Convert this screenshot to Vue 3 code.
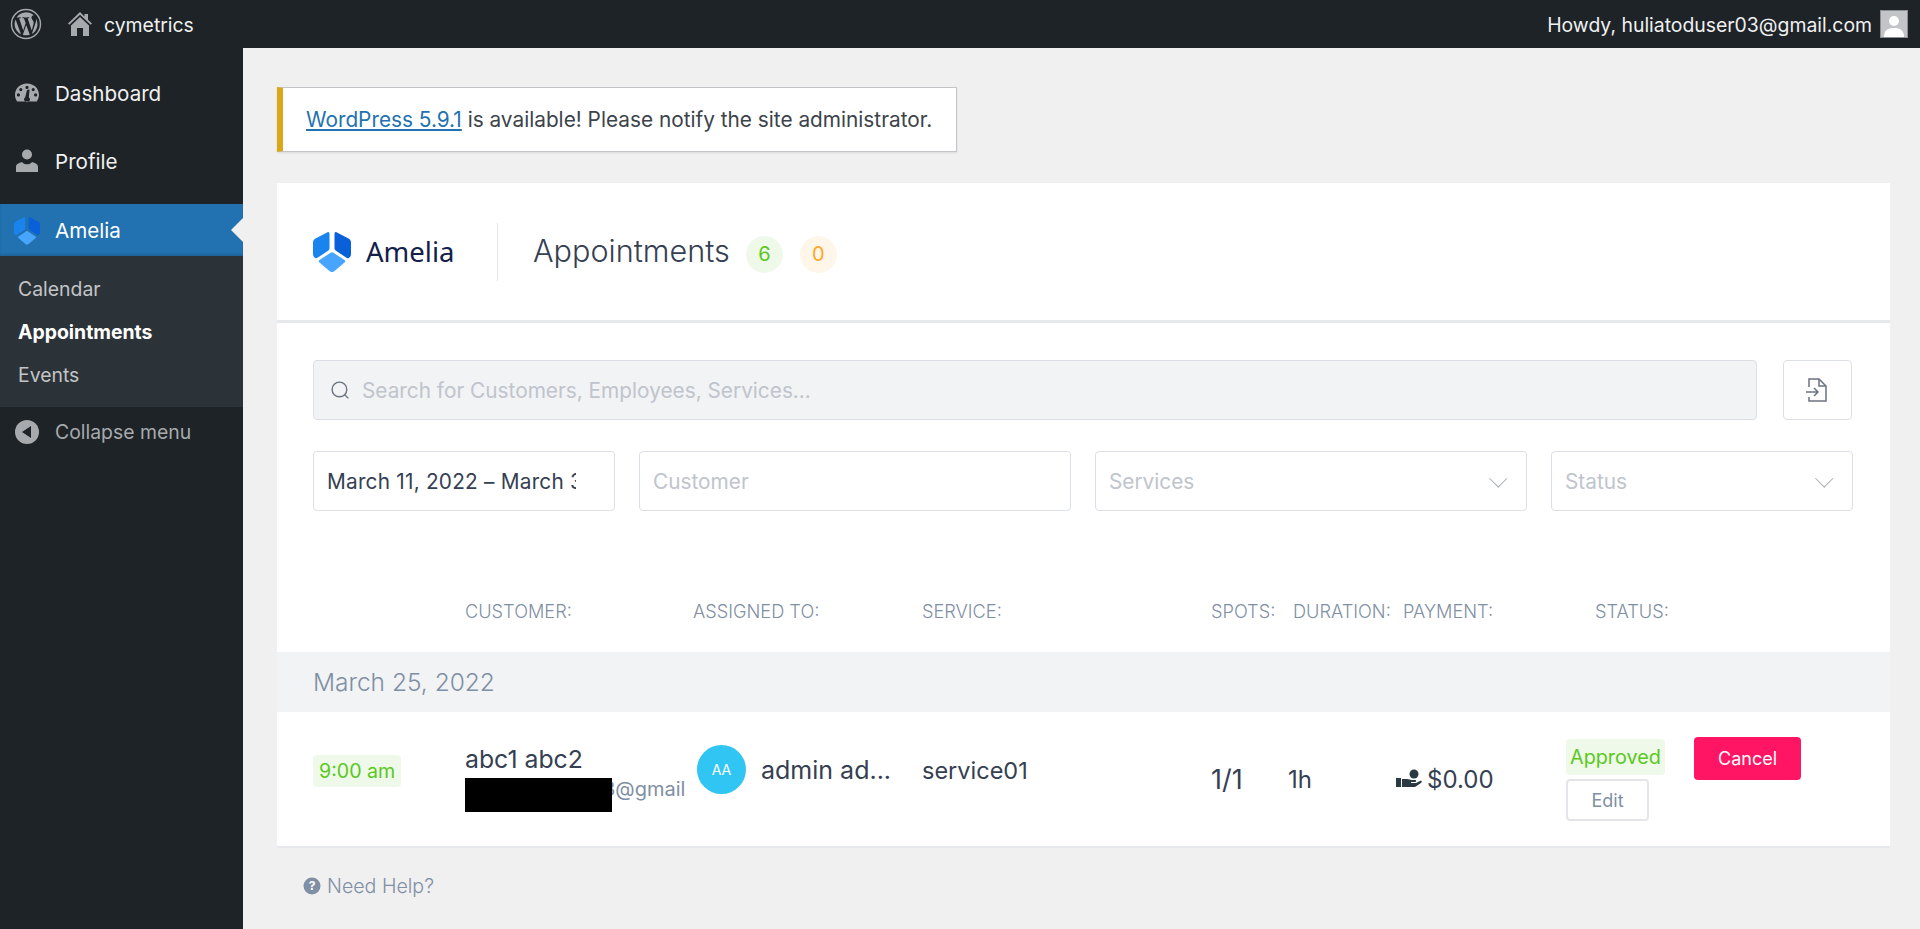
<script setup>
const menu = ['Calendar', 'Appointments', 'Events']
const headers = [
  { label: '', w: 152 },
  { label: 'CUSTOMER:', w: 228 },
  { label: 'ASSIGNED TO:', w: 229 },
  { label: 'SERVICE:', w: 289 },
  { label: 'SPOTS:', w: 82 },
  { label: 'DURATION:', w: 110 },
  { label: 'PAYMENT:', w: 192 },
  { label: 'STATUS:', w: 100 }
]
</script>

<template>
  <div class="page">
    <header class="topbar">
      <div class="top-left">
        <svg class="wp" viewBox="0 0 32 32" width="32" height="32">
          <circle cx="16" cy="16" r="14.5" fill="none" stroke="#a7aaad" stroke-width="1.4" />
          <path fill="#a7aaad" d="M4.6 16c0 4.5 2.6 8.4 6.4 10.2L5.6 11.4A11.4 11.4 0 0 0 4.6 16Zm19.1-.6c0-1.4-.5-2.4-1-3.1-.6-1-1.200-1.900-1.200-2.900 0-1.100.9-2.200 2.100-2.200h.2A11.4 11.4 0 0 0 6.600 9.500h.7c1.200 0 3-.2 3-.2.6 0 .7.9.1.9 0 0-.6.1-1.300.1l4.100 12.300 2.500-7.500-1.800-4.800c-.6 0-1.200-.1-1.200-.1-.6 0-.5-1 .1-.9 0 0 1.900.2 3 .2 1.200 0 3-.2 3-.2.6 0 .7.9.1.9 0 0-.6.1-1.300.1l4.100 12.200 1.100-3.800c.5-1.500.8-2.600.8-3.600Zm-7.500 1.600-3.400 9.900a11.400 11.400 0 0 0 7-.2l-.1-.1-3.500-9.600Zm9.800-6.400.1 1.200c0 1.200-.2 2.500-.9 4.200l-3.400 10a11.400 11.400 0 0 0 4.200-15.400Z" />
        </svg>
        <svg class="home" viewBox="0 0 24 26" width="24" height="26">
          <path fill="#a7aaad" d="M12 1 0 12.500l1.300 1.300L12 3.700l10.700 10.100 1.300-1.300-4-3.800V3h-3.500v2.400L12 1Z" />
          <path fill="#a7aaad" fill-rule="evenodd" d="M12 6 3 14.500V25h18V14.500L12 6Zm-3 11h6v8H9Z" />
        </svg>
        <span class="site">cymetrics</span>
      </div>
      <div class="top-right">
        <span class="howdy">Howdy, huliatoduser03@gmail.com</span>
        <span class="avatar">
          <svg viewBox="0 0 26 26" width="26" height="26">
            <rect width="26" height="26" fill="#c3c4c7" />
            <circle cx="13" cy="10" r="5" fill="#fff" />
            <path fill="#fff" d="M3 26c0-7 4-9 10-9s10 2 10 9Z" />
          </svg>
        </span>
      </div>
    </header>

    <div class="body">
      <aside class="sidebar">
        <a class="item">
          <svg class="mi" viewBox="0 0 26 24" width="26" height="24">
            <path fill="#a7aaad" fill-rule="evenodd" d="M13 2.500C6 2.500 1 7.500 1 14c0 2.500.8 4.800 2.200 6.500h19.600A11 11 0 0 0 25 14c0-6.500-5-11.500-12-11.500Zm0 2.300a1.600 1.600 0 1 1 0 3.200 1.600 1.600 0 0 1 0-3.200ZM6.800 7a1.600 1.600 0 1 1 0 3.200 1.600 1.600 0 0 1 0-3.200Zm12.400 0a1.600 1.600 0 1 1 0 3.200 1.600 1.600 0 0 1 0-3.200ZM4.400 12.300a1.600 1.600 0 1 1 0 3.200 1.600 1.600 0 0 1 0-3.200Zm17.200 0a1.600 1.600 0 1 1 0 3.200 1.600 1.600 0 0 1 0-3.200ZM15.600 8.500l-.8 7.700a2.800 2.800 0 1 1-3.600 0L13 9Z" />
          </svg>
          <span>Dashboard</span>
        </a>
        <a class="item">
          <svg class="mi" viewBox="0 0 26 26" width="26" height="26">
            <circle cx="13" cy="6.500" r="5" fill="#a7aaad" />
            <path fill="#a7aaad" d="M2 24v-5c0-3 3-4 6-5 1 1.500 3 2.300 5 2.300s4-.8 5-2.300c3 1 6 2 6 5v5Z" />
          </svg>
          <span>Profile</span>
        </a>
        <a class="item active">
          <svg class="mi" viewBox="0 0 38 41" width="27" height="29">
            <path fill="#1a84ee" d="M14.500 1.300 2.500 7.600C.8 8.500 0 9.800 0 11.500V23c0 2 .8 3.200 2.200 3.900.8.400 1.600.300 2.300-.1l10.500-7c1-.7 1.500-1.500 1.500-2.800V3c0-1.700-1-2.500-2-1.700Z" />
            <path fill="#0a60d8" d="M23.500 1.300l12 6.300c1.700.9 2.500 2.200 2.500 3.900V23c0 2-.8 3.200-2.200 3.900-.8.400-1.600.300-2.300-.1l-10.500-7c-1-.7-1.500-1.500-1.500-2.800V3c0-1.700 1-2.500 2-1.700Z" />
            <path fill="#47a5ff" d="M17.500 21.800c1-.7 2-.7 3 0l11 7.300c1 .7 1 1.700 0 2.400l-10.500 9c-1.200.7-2.800.7-4 0l-10.500-9c-1-.7-1-1.700 0-2.400Z" />
          </svg>
          <span>Amelia</span>
          <i class="notch"></i>
        </a>
        <nav class="submenu">
          <a v-for="m in menu" :key="m" class="sub" :class="{ current: m === 'Appointments' }">{{ m }}</a>
        </nav>
        <a class="collapse">
          <svg class="mi" viewBox="0 0 26 26" width="26" height="26">
            <circle cx="13" cy="13" r="12" fill="#a7aaad" />
            <path fill="#1d2327" d="M17 7v12L8 13Z" />
          </svg>
          <span>Collapse menu</span>
        </a>
      </aside>

      <main class="main">
        <div class="notice">
          <a class="link">WordPress 5.9.1</a> is available! Please notify the site administrator.
        </div>

        <section class="card">
          <div class="head">
            <div class="brand">
              <svg viewBox="0 0 38 41" width="38" height="41">
                <path fill="#1a84ee" d="M14.500 1.300 2.500 7.600C.8 8.500 0 9.800 0 11.500V23c0 2 .8 3.200 2.200 3.900.8.400 1.600.300 2.300-.1l10.500-7c1-.7 1.500-1.500 1.500-2.800V3c0-1.700-1-2.500-2-1.700Z" />
                <path fill="#0a60d8" d="M23.500 1.300l12 6.300c1.700.9 2.500 2.200 2.500 3.900V23c0 2-.8 3.200-2.200 3.900-.8.400-1.600.300-2.300-.1l-10.500-7c-1-.7-1.500-1.500-1.500-2.800V3c0-1.700 1-2.500 2-1.700Z" />
                <path fill="#47a5ff" d="M17.500 21.800c1-.7 2-.7 3 0l11 7.300c1 .7 1 1.700 0 2.400l-10.500 9c-1.200.7-2.800.7-4 0l-10.500-9c-1-.7-1-1.700 0-2.400Z" />
              </svg>
              <span class="brand-name">Amelia</span>
            </div>
            <div class="title-wrap">
              <h1>Appointments</h1>
              <span class="count green">6</span>
              <span class="count orange">0</span>
            </div>
          </div>

          <div class="filters">
            <div class="search-row">
              <div class="search">
                <svg viewBox="0 0 20 20" width="21" height="21">
                  <circle cx="9" cy="9" r="7" fill="none" stroke="#6b7280" stroke-width="1.300" />
                  <path d="m14 14 3.500 3.500" stroke="#6b7280" stroke-width="1.300" />
                </svg>
                <span>Search for Customers, Employees, Services...</span>
              </div>
              <button class="export">
                <svg viewBox="0 0 26 26" width="26" height="26" fill="none" stroke="#6b7280" stroke-width="1.500">
                  <path d="M4 10V2h10l7 7v15H4v-4" />
                  <path d="M14 2v7h7M1 15h12M9 11l4 4-4 4" />
                </svg>
              </button>
            </div>
            <div class="filter-row">
              <div class="field date"><span class="clip">March 11, 2022 – March 31, 2022</span></div>
              <div class="field wide"><span class="ph">Customer</span></div>
              <div class="field wide"><span class="ph">Services</span><i class="chev"></i></div>
              <div class="field status"><span class="ph">Status</span><i class="chev"></i></div>
            </div>
          </div>

          <div class="thead">
            <span v-for="h in headers" :key="h.label" class="th" :style="{ width: h.w + 'px' }">{{ h.label }}</span>
          </div>

          <div class="date-row">March 25, 2022</div>

          <div class="row">
            <div class="col c-time"><span class="time">9:00 am</span></div>
            <div class="col c-cust">
              <div class="name">abc1 abc2</div>
              <div class="mail"><span class="redact"></span><span class="mail-text">3@gmail.com</span></div>
            </div>
            <div class="col c-emp">
              <span class="ava">AA</span>
              <span class="text emp-name">admin ad...</span>
            </div>
            <div class="col c-serv"><span class="text serv-name">service01</span></div>
            <div class="col c-spots"><span class="text spots">1/1</span></div>
            <div class="col c-dur"><span class="text">1h</span></div>
            <div class="col c-pay">
              <svg viewBox="0 0 26 20" width="26" height="20">
                <circle cx="18" cy="5" r="4.500" fill="#2b3a42" />
                <rect x="0" y="9" width="5" height="9" fill="#2b3a42" />
                <path fill="#2b3a42" d="M6 10h5c2 0 3 1 5 1h3c1.500 0 1.500 2 0 2h-4v1h5l4-2c1.500-.6 2.500 1 1 2l-6 4H6Z" />
              </svg>
              <span class="text">$0.00</span>
            </div>
            <div class="col c-status">
              <span class="approved">Approved</span>
              <button class="edit">Edit</button>
            </div>
            <button class="cancel">Cancel</button>
          </div>
        </section>

        <div class="help">
          <svg viewBox="0 0 18 18" width="18" height="18">
            <circle cx="9" cy="9" r="8.500" fill="#7f8fa4" />
            <text x="9" y="13" text-anchor="middle" font-size="12" font-weight="700" fill="#fff" font-family="Inter, sans-serif">?</text>
          </svg>
          <span>Need Help?</span>
        </div>
      </main>
    </div>
  </div>
</template>

<style>
html, body { margin: 0; padding: 0; background: #f0f0f1; }
</style>

<style scoped>
.page { width: 1920px; height: 929px; overflow: hidden; font-family: Inter, "Liberation Sans", sans-serif; background: #f0f0f1; display: flex; flex-direction: column; }
.topbar { height: 48px; flex: none; background: #1d2327; display: flex; justify-content: space-between; align-items: center; padding: 0 12px 0 10px; box-sizing: border-box; color: #f0f0f1; font-size: 19.4px; }
.top-left, .top-right { display: flex; align-items: center; }
.wp { margin-right: 26px; }
.home { margin-right: 12px; }
.site { margin-top: 1px; }
.howdy { margin: 1px 8px 0 0; }
.avatar { width: 28px; height: 28px; border: 1px solid #8c8f94; box-sizing: border-box; display: flex; overflow: hidden; }

.body { flex: 1; display: flex; min-height: 0; }
.sidebar { width: 243px; flex: none; background: #1d2327; padding-top: 11px; box-sizing: border-box; }
.item { height: 68px; display: flex; align-items: center; color: #f0f0f1; font-size: 20.6px; padding-left: 14px; box-sizing: border-box; }
.item .mi { margin-right: 15px; width: 26px; flex: none; }
.item.active { height: 52px; margin-top: 9px; background: #2271b1; color: #fff; position: relative; box-shadow: inset 0 -2px 2px rgba(0,0,0,.12); }
.notch { position: absolute; right: 0; top: 14px; border: 12px solid transparent; border-right-color: #f0f0f1; border-left-width: 0; }
.submenu { background: #2c3338; height: 151px; padding: 12px 0 11px; box-sizing: border-box; display: flex; flex-direction: column; }
.sub { color: #c3c4c7; font-size: 19.4px; padding: 0 18px; line-height: 43px; }
.sub.current { color: #fff; font-weight: 700; }
.collapse { height: 50px; display: flex; align-items: center; padding-left: 14px; color: #a7aaad; font-size: 19.4px; }
.collapse .mi { margin-right: 15px; }

.main { flex: 1; min-width: 0; padding: 39px 30px 0 34px; box-sizing: border-box; }
.notice { width: 680px; height: 65px; box-sizing: border-box; background: #fff; border: 1px solid #c3c4c7; border-left: 6px solid #dba617; display: flex; align-items: center; white-space: pre; padding-left: 23px; font-size: 20.8px; color: #3c434a; box-shadow: 0 1px 2px rgba(0,0,0,.1); }
.link { color: #2271b1; text-decoration: underline; }

.card { margin-top: 31px; background: #fff; width: 1613px; height: 665px; border-bottom: 2px solid #e6e8ec; box-sizing: border-box; }
.head { height: 137px; border-bottom: 3px solid #e6e8ec; display: flex; align-items: center; padding-left: 36px; box-sizing: content-box; }
.brand { width: 184px; height: 58px; border-right: 1px solid #e2e5e9; display: flex; align-items: center; box-sizing: content-box; }
.brand-name { font-family: "Noto Sans", sans-serif; font-size: 27.5px; font-weight: 400; color: #12204a; margin-left: 15px; margin-top: -1px; }
.title-wrap { display: flex; align-items: center; margin-left: 35px; }
h1 { margin: -2px 16px 0 0; font-size: 30.6px; font-weight: 300; color: #354052; }
.count { width: 37px; height: 37px; border-radius: 50%; display: flex; align-items: center; justify-content: center; font-size: 20px; margin-right: 17px; margin-top: 5px; }
.green { background: #eff9e9; color: #5ac81e; }
.orange { background: #fff6ea; color: #ffa726; }

.filters { padding: 37px 38px 0 36px; }
.search-row { display: flex; justify-content: space-between; }
.search { width: 1444px; height: 60px; box-sizing: border-box; background: #f1f3f5; border: 1px solid #dcdfe6; border-radius: 4px; display: flex; align-items: center; padding-left: 16px; gap: 11px; color: #c0c4cc; font-size: 20.8px; }
.export { width: 69px; height: 60px; background: #fff; border: 1px solid #dcdfe6; border-radius: 4px; display: flex; align-items: center; justify-content: center; padding: 0; }
.filter-row { display: flex; gap: 24px; margin-top: 31px; width: 1540px; }
.field { height: 60px; box-sizing: border-box; border: 1px solid #dcdfe6; border-radius: 4px; display: flex; align-items: center; justify-content: space-between; padding: 0 22px 0 13px; font-size: 20.8px; position: relative; flex: none; }
.date { width: 302px; color: #354052; padding-right: 38px; letter-spacing: .22px; }
.clip { overflow: hidden; white-space: nowrap; }
.wide { width: 432px; }
.status { width: 302px; }
.ph { color: #c0c4cc; }
.chev { width: 11.5px; height: 11.5px; border-right: 1px solid #a9adb5; border-bottom: 1px solid #a9adb5; transform: rotate(45deg); margin-top: -6px; }

.thead { display: flex; margin-top: 90px; padding-left: 36px; height: 21px; }
.th { flex: none; font-size: 18.2px; font-weight: 300; color: #7f8fa4; line-height: 21px; white-space: nowrap; }
.date-row { margin-top: 30px; height: 60px; background: #f1f3f5; display: flex; align-items: center; padding-left: 36px; font-size: 24.5px; font-weight: 300; color: #7f8fa4; }

.row { height: 134px; display: flex; padding-left: 36px; position: relative; }
.col { flex: none; box-sizing: border-box; }
.text { font-size: 24px; color: #354052; white-space: nowrap; }
.emp-name { font-size: 25px; }
.serv-name { font-size: 23.5px; }
.spots { font-size: 27px; }
.c-time { width: 152px; padding-top: 43px; }
.time { display: inline-block; background: #eff9e9; color: #5ac81e; font-size: 19.6px; line-height: 32px; height: 32px; padding: 0 6px; border-radius: 4px; }
.c-cust { width: 228px; padding-top: 32px; }
.name { font-size: 24.8px; color: #354052; line-height: 30px; }
.mail { display: flex; align-items: center; margin-top: 3px; width: 222px; overflow: hidden; white-space: nowrap; }
.redact { width: 147px; height: 34px; background: #000; flex: none; position: relative; z-index: 1; }
.mail-text { font-size: 20px; color: #7f8fa4; margin: 0 0 11px -9px; }
.c-emp { width: 229px; display: flex; align-items: flex-start; padding-top: 34px; padding-left: 4px; }
.ava { width: 49px; height: 49px; border-radius: 50%; background: #31c5f4; color: #fff; font-size: 14px; display: flex; align-items: center; justify-content: center; margin: -1px 15px 0 0; flex: none; }
.c-emp .text { line-height: 49px; }
.c-serv { width: 289px; padding-top: 44px; line-height: 30px; }
.c-spots { width: 82px; padding-top: 53px; line-height: 30px; }
.c-dur { width: 110px; padding-top: 53px; line-height: 30px; margin-left: -5px; margin-right: 5px; }
.c-pay { width: 192px; padding-top: 53px; display: flex; align-items: flex-start; gap: 5px; margin-left: -7px; margin-right: 7px; line-height: 30px; }
.c-pay svg { margin-top: 4px; }
.c-status { display: flex; flex-direction: column; align-items: flex-start; padding-top: 27px; width: 99px; margin-left: -29px; margin-right: 29px; }
.approved { background: #eff9e9; color: #5ac81e; font-size: 19.8px; line-height: 36px; height: 36px; padding: 0 4px; border-radius: 4px; }
.edit { margin-top: 4px; width: 83px; height: 42px; background: #fff; border: 2px solid #e3e5ea; border-radius: 4px; color: #7f8fa4; font-size: 18px; font-family: inherit; padding: 0; }
.cancel { position: relative; margin-top: 25px; width: 107px; height: 43px; background: #ff1563; border: 0; border-radius: 4px; color: #fff; font-size: 18px; font-family: inherit; padding: 0; flex: none; }

.help { display: flex; align-items: center; gap: 6px; margin: 26px 0 0 26px; color: #7f8fa4; font-size: 19.6px; font-weight: 300; }
</style>
